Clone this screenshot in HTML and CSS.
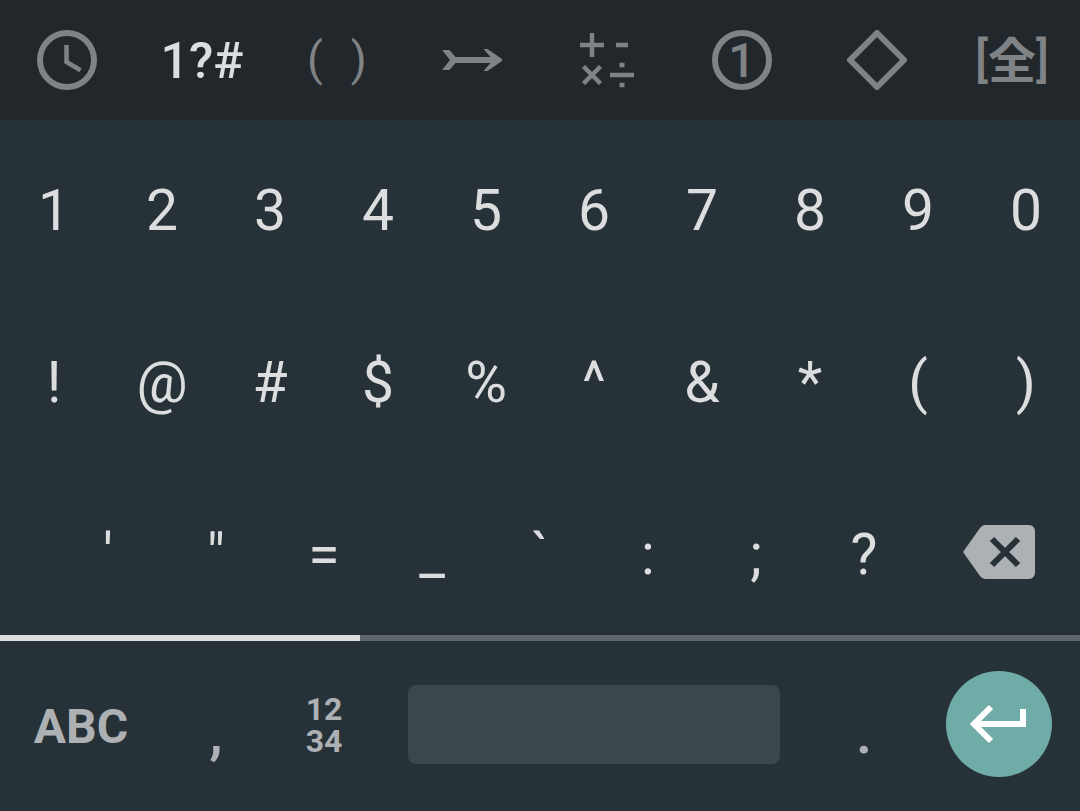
FILE: index.html
```html
<!DOCTYPE html>
<html lang="en">
<head>
<meta charset="utf-8">
<meta name="viewport" content="width=device-width, initial-scale=1">
<title>Symbol keyboard</title>
<link rel="stylesheet" href="styles.css">
</head>
<body>
<main class="keyboard">
  <nav class="tabs" aria-label="Symbol categories">
    <button class="tab" type="button" aria-label="Recent">
      <svg class="icon" viewBox="0 0 60 60" aria-hidden="true"><circle cx="30" cy="30" r="27" stroke-width="6"/><path d="M29.5 15v17l14 8.300" stroke-width="4.500"/></svg>
    </button>
    <button class="tab tab-active" type="button" aria-current="true">1?#</button>
    <button class="tab tab-parens" type="button"><span>(</span><span>)</span></button>
    <button class="tab" type="button" aria-label="Arrows">
      <svg class="icon" viewBox="0 0 60 60" aria-hidden="true"><path d="M12 30H52" stroke-width="6"/><path class="solid" d="M0 20h7.500l6 7v6l-6 7H0l8-10zM41.500 19h4L60 29v2L45.500 41h-4l7-8v-6z"/></svg>
    </button>
    <button class="tab" type="button" aria-label="Math">
      <svg class="icon" viewBox="0 0 60 60" aria-hidden="true"><path d="M3 15h24M15 3v24M39 15h12M6.500 36.500l17 17M23.500 36.500l-17 17M33 45h24" stroke-width="4.500"/><path d="M42.500 35h5M42.500 55h5" stroke-width="4.500"/></svg>
    </button>
    <button class="tab" type="button"><span class="circled">1</span></button>
    <button class="tab" type="button" aria-label="Shapes">
      <svg class="icon" viewBox="0 0 60 60" aria-hidden="true"><path d="M30 3L57 30L30 57L3 30z" stroke-width="6" stroke-linejoin="round"/></svg>
    </button>
    <button class="tab tab-wide" type="button"><span>[</span><span class="han" lang="ja">全</span><span>]</span></button>
  </nav>

  <section class="keys" aria-label="Symbols">
    <div class="row">
      <button class="key" type="button">1</button><button class="key" type="button">2</button><button class="key" type="button">3</button><button class="key" type="button">4</button><button class="key" type="button">5</button><button class="key" type="button">6</button><button class="key" type="button">7</button><button class="key" type="button">8</button><button class="key" type="button">9</button><button class="key" type="button">0</button>
    </div>
    <div class="row">
      <button class="key" type="button">!</button><button class="key" type="button">@</button><button class="key" type="button">#</button><button class="key" type="button">$</button><button class="key" type="button">%</button><button class="key" type="button">^</button><button class="key" type="button">&amp;</button><button class="key" type="button">*</button><button class="key" type="button">(</button><button class="key" type="button">)</button>
    </div>
    <div class="row row-last">
      <button class="key" type="button">'</button><button class="key" type="button">"</button><button class="key" type="button">=</button><button class="key" type="button">_</button><button class="key" type="button">`</button><button class="key" type="button">:</button><button class="key" type="button">;</button><button class="key" type="button">?</button>
      <button class="key key-delete" type="button" aria-label="Backspace">
        <svg class="backspace" viewBox="0 0 72 54" aria-hidden="true"><path d="M22 0H66a6 6 0 0 1 6 6V48a6 6 0 0 1-6 6H22q-3 0-5-3L0 27L17 3q2-3 5-3z"/><path class="cross" d="M29 14l26 26M55 14l-26 26"/></svg>
      </button>
    </div>
  </section>

  <div class="pager" role="progressbar" aria-label="Page" aria-valuemin="0" aria-valuemax="3" aria-valuenow="1"><div class="pager-current"></div></div>

  <section class="bottom" aria-label="Actions">
    <button class="action abc" type="button">ABC</button>
    <button class="action mark" type="button">,</button>
    <button class="action numpad" type="button">12<br>34</button>
    <button class="space" type="button" aria-label="Space"></button>
    <button class="action mark" type="button">.</button>
    <button class="enter" type="button" aria-label="Enter">
      <svg class="icon" viewBox="0 0 60 60" aria-hidden="true"><path d="M54 15V30H8M22 13L5 30L22 47" stroke-width="6"/></svg>
    </button>
  </section>
</main>
</body>
</html>
```
FILE: styles.css
```css
* {
  box-sizing: border-box;
}

body {
  margin: 0;
  background: #273238;
  font-family: Roboto, "Noto Sans CJK JP", sans-serif;
}

button {
  margin: 0;
  padding: 0;
  border: 0;
  background: none;
  color: inherit;
  font: inherit;
}

.keyboard {
  display: flex;
  flex-direction: column;
  min-height: 100vh;
}

.tabs {
  display: grid;
  grid-template-columns: repeat(8, 1fr);
  height: 120px;
  background: #22272b;
  color: #7f8386;
}

.tab {
  display: flex;
  align-items: center;
  justify-content: center;
  padding-right: 1px;
}

.tab-active {
  padding-top: 2px;
  color: #dcddde;
  font-size: 50px;
  font-weight: 500;
}

.tab-parens {
  gap: 28px;
  padding-bottom: 2px;
  font-size: 46px;
}

.tab-wide {
  padding-bottom: 2px;
  font-size: 48px;
  font-weight: 500;
}

.han {
  padding-bottom: 4px;
  font-family: "Noto Sans CJK JP", sans-serif;
  font-size: 48px;
  font-weight: 700;
  line-height: 60px;
}

.icon {
  width: 60px;
  height: 60px;
  fill: none;
  stroke: currentColor;
}

.icon .solid {
  fill: currentColor;
  stroke: none;
}

.circled {
  width: 60px;
  height: 60px;
  border: 6px solid currentColor;
  border-radius: 50%;
  font-size: 48px;
  font-weight: 500;
  line-height: 50px;
}

.keys {
  display: flex;
  flex: 1;
  flex-direction: column;
  color: #dcddde;
  font-size: 57px;
}

.row {
  display: grid;
  flex: 1;
  grid-template-columns: repeat(10, 1fr);
  padding-top: 10px;
}

.row-last {
  grid-template-columns: 1fr repeat(8, 2fr) 3fr;
}

.row-last .key:first-child {
  grid-column-start: 2;
}

.key {
  display: flex;
  align-items: center;
  justify-content: center;
}

.key-delete {
  padding-bottom: 4px;
}

.backspace {
  width: 72px;
  height: 54px;
  fill: #aeb1b4;
}

.cross {
  stroke: #273238;
  stroke-width: 6;
}

.pager {
  height: 6px;
  background: #5f666a;
}

.pager-current {
  width: 33.333%;
  height: 100%;
  background: #dcddde;
}

.bottom {
  display: grid;
  grid-template-columns: 3fr 2fr 2fr 8fr 2fr 3fr;
  align-items: center;
  height: 170px;
  padding-bottom: 4px;
  color: #aeb1b4;
}

.abc {
  padding-top: 4px;
  font-size: 48px;
  font-weight: 700;
}

.mark {
  padding-top: 16px;
  font-size: 60px;
  font-weight: 500;
}

.numpad {
  padding-top: 2px;
  font-size: 32px;
  font-weight: 700;
  line-height: 32px;
}

.space {
  height: 79px;
  margin: 0 30px;
  border-radius: 8px;
  background: #3c474c;
}

.enter {
  display: flex;
  align-items: center;
  justify-content: center;
  justify-self: center;
  width: 106px;
  height: 106px;
  border-radius: 50%;
  background: #6faca8;
  color: #fff;
}
```
